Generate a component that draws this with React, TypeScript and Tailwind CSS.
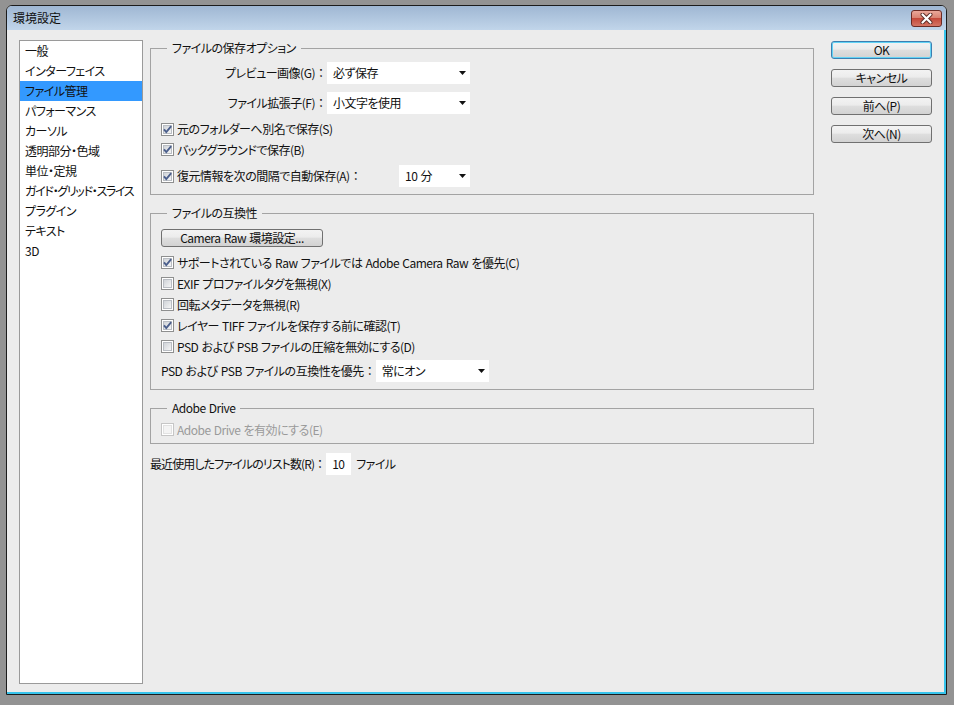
import React from "react";

const Check = ({ checked, disabled }: { checked?: boolean; disabled?: boolean }) => (
  <svg width="13" height="13" viewBox="0 0 13 13" className="mr-[3px] shrink-0">
    <defs>
      <linearGradient id="cbg" x1="0" y1="0" x2="1" y2="1">
        <stop offset="0" stopColor="#cdd1d6" />
        <stop offset="1" stopColor="#f7f7f7" />
      </linearGradient>
    </defs>
    <rect x="0.5" y="0.5" width="12" height="12" fill="#fff" stroke={disabled ? "#c6c6c6" : "#8e8f8f"} />
    <rect
      x="2.5"
      y="2.5"
      width="8"
      height="8"
      fill={disabled ? "#f4f4f4" : "url(#cbg)"}
      stroke={disabled ? "#e2e2e2" : "#b9bdc3"}
    />
    {checked && <path d="M3 6.3 L5.3 9 L10.2 3.2" fill="none" stroke="#4b5f8c" strokeWidth="1.9" />}
  </svg>
);

const Arrow = () => (
  <svg width="7" height="4" viewBox="0 0 7 4" className="shrink-0">
    <path d="M0 0H7L3.5 4Z" fill="#111" />
  </svg>
);

const Colon = () => <span className="[font-feature-settings:normal] tracking-normal">：</span>;

const Select = ({ w, children }: { w: string; children: React.ReactNode }) => (
  <div className={`flex h-[22px] shrink-0 items-center justify-between bg-white pl-[6px] pr-[4px] ${w}`}>
    <span className="whitespace-nowrap">{children}</span>
    <Arrow />
  </div>
);

const CheckRow = ({
  checked,
  disabled,
  h,
  children,
}: {
  checked?: boolean;
  disabled?: boolean;
  h: string;
  children: React.ReactNode;
}) => (
  <div className={`flex items-center ${h}`}>
    <Check checked={checked} disabled={disabled} />
    <span className={`whitespace-nowrap ${disabled ? "text-[#9a9a9a]" : ""}`}>{children}</span>
  </div>
);

const WinButton = ({ children, primary }: { children: React.ReactNode; primary?: boolean }) => (
  <div
    className={`flex h-[18px] w-[101px] items-center justify-center rounded-[3px] border bg-[linear-gradient(#f3f3f3_0%,#ececec_45%,#dedede_50%,#d2d2d2_100%)] leading-none ${
      primary ? "border-[#3c7fb1] shadow-[inset_0_0_0_1px_#62d3f5]" : "border-[#707070]"
    }`}
  >
    {children}
  </div>
);

export default function App() {
  const listItems = [
    "一般",
    "インターフェイス",
    "ファイル管理",
    "パフォーマンス",
    "カーソル",
    "透明部分・色域",
    "単位・定規",
    "ガイド・グリッド・スライス",
    "プラグイン",
    "テキスト",
    "3D",
  ];

  return (
    <div className="h-[705px] w-[954px] bg-[#939393] pl-[6px] pt-[5px] font-['Noto_Sans_CJK_JP','Noto_Sans',sans-serif] text-[12px] text-[#111] [font-feature-settings:'palt']">
      <div className="flex h-[690px] w-[941px] flex-col rounded-t-[6px] border border-[#1c1c1c] bg-[#ececec]">
        {/* title bar */}
        <div className="flex h-[24px] shrink-0 items-center justify-between rounded-t-[5px] bg-[linear-gradient(#9fb7d3,#c1d5ea)] pl-[6px] pr-[4px]">
          <span className="text-[12px] leading-none text-[#111]">環境設定</span>
          <div className="flex h-[17px] w-[31px] items-center justify-center rounded-[3px] border border-[#6a2b25] bg-[linear-gradient(#eaa89a_0%,#d98372_45%,#c4493a_50%,#d47565_100%)]">
            <svg width="13" height="11" viewBox="0 0 13 11">
              <path d="M2.5 1.5 L10.5 9.5 M10.5 1.5 L2.5 9.5" stroke="#5a2a25" strokeWidth="4" strokeLinecap="round" />
              <path d="M2.5 1.5 L10.5 9.5 M10.5 1.5 L2.5 9.5" stroke="#fff" strokeWidth="2.2" strokeLinecap="round" />
            </svg>
          </div>
        </div>

        {/* body */}
        <div className="flex flex-1 border-b-2 border-r-2 border-[#37c4ec] pb-[8px] pl-[12px] pt-[10px] tracking-[-0.5px] [word-spacing:1px]">
          {/* list */}
          <div className="w-[124px] shrink-0 border border-[#9a9a9a] bg-white">
            {listItems.map((it, i) => (
              <div
                key={it}
                className={`h-[20px] whitespace-nowrap pl-[5px] leading-[20px] ${
                  i === 2 ? "bg-[#3399ff] text-[#111]" : ""
                } ${i === 7 ? "tracking-[-1.3px]" : ""}`}
              >
                {it}
              </div>
            ))}
          </div>

          {/* middle */}
          <div className="ml-[7px] flex w-[664px] shrink-0 flex-col">
            <fieldset className="w-full border border-[#a3a3a3] pb-[7px] pl-[10px]">
              <legend className="ml-[6px] px-[5px] leading-[16px]">ファイルの保存オプション</legend>
              <div className="mt-[6px] flex h-[22px] items-center">
                <span className="w-[166px] whitespace-nowrap text-right">
                  プレビュー画像(G)
                  <Colon />
                </span>
                <Select w="w-[143px]">必ず保存</Select>
              </div>
              <div className="mt-[8px] flex h-[22px] items-center">
                <span className="w-[166px] whitespace-nowrap text-right">
                  ファイル拡張子(F)
                  <Colon />
                </span>
                <Select w="w-[143px]">小文字を使用</Select>
              </div>
              <div className="mt-[5px]">
                <CheckRow checked h="h-[20px]">元のフォルダーへ別名で保存(S)</CheckRow>
                <CheckRow checked h="h-[21px]">バックグラウンドで保存(B)</CheckRow>
              </div>
              <div className="mt-[5px] flex h-[22px] w-[309px] items-center justify-between">
                <div className="flex items-center">
                  <Check checked />
                  <span className="whitespace-nowrap">
                    復元情報を次の間隔で自動保存(A)
                    <Colon />
                  </span>
                </div>
                <Select w="w-[71px]">10 分</Select>
              </div>
            </fieldset>

            <fieldset className="mt-[10px] w-full border border-[#a3a3a3] pb-[7px] pl-[10px]">
              <legend className="ml-[6px] px-[5px] leading-[16px]">ファイルの互換性</legend>
              <div className="mt-[8px] flex h-[18px] w-[162px] items-center justify-center rounded-[3px] border border-[#707070] bg-[linear-gradient(#f3f3f3_0%,#ececec_45%,#dedede_50%,#d2d2d2_100%)] leading-none">
                Camera Raw 環境設定...
              </div>
              <div className="mt-[5px]">
                <CheckRow checked h="h-[21px]">
                  サポートされている Raw ファイルでは Adobe Camera Raw を優先(C)
                </CheckRow>
                <CheckRow h="h-[21px]">EXIF プロファイルタグを無視(X)</CheckRow>
                <CheckRow h="h-[21px]">回転メタデータを無視(R)</CheckRow>
                <CheckRow checked h="h-[21px]">レイヤー TIFF ファイルを保存する前に確認(T)</CheckRow>
                <CheckRow h="h-[21px]">PSD および PSB ファイルの圧縮を無効にする(D)</CheckRow>
              </div>
              <div className="mt-[3px] flex h-[22px] w-[326px] items-center justify-between">
                <span className="whitespace-nowrap">
                  PSD および PSB ファイルの互換性を優先
                  <Colon />
                </span>
                <Select w="w-[113px]">常にオン</Select>
              </div>
            </fieldset>

            <fieldset className="mt-[10px] w-full border border-[#a3a3a3] pb-[3px] pl-[10px]">
              <legend className="ml-[6px] px-[5px] leading-[16px]">Adobe Drive</legend>
              <div className="mt-[3px]">
                <CheckRow disabled h="h-[21px]">Adobe Drive を有効にする(E)</CheckRow>
              </div>
            </fieldset>

            <div className="mt-[9px] flex h-[22px] items-center">
              <span className="whitespace-nowrap tracking-[-0.9px]">
                最近使用したファイルのリスト数(R)
                <Colon />
              </span>
              <div className="flex h-[22px] w-[25px] items-center bg-white pl-[6px]">10</div>
              <span className="ml-[5px] whitespace-nowrap">ファイル</span>
            </div>
          </div>

          {/* buttons */}
          <div className="ml-[17px] flex w-[101px] shrink-0 flex-col gap-[10px] pt-[1px]">
            <WinButton primary>OK</WinButton>
            <WinButton>キャンセル</WinButton>
            <WinButton>前へ(P)</WinButton>
            <WinButton>次へ(N)</WinButton>
          </div>
        </div>
      </div>
    </div>
  );
}
